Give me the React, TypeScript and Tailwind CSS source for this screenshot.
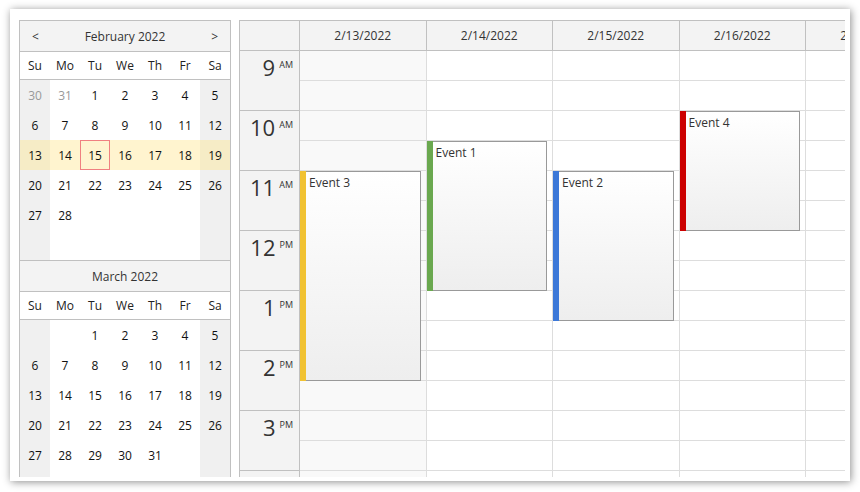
import React from "react";

type DayCell = { day: number | null; other?: boolean };

interface MonthProps {
  title: string;
  cells: DayCell[];
  arrows?: boolean;
  selectedRow?: number;
  today?: number;
}

const dayNames = ["Su", "Mo", "Tu", "We", "Th", "Fr", "Sa"];

const build = (lead: (number | null)[], count: number): DayCell[] => {
  const cells: DayCell[] = lead.map((d) => ({ day: d, other: d !== null }));
  for (let i = 1; i <= count; i++) cells.push({ day: i });
  while (cells.length < 42) cells.push({ day: null });
  return cells;
};

const february = build([30, 31], 28);
const march = build([null, null], 31);

const NavMonth: React.FC<MonthProps> = ({ title, cells, arrows, selectedRow, today }) => {
  const rows = [0, 1, 2, 3, 4, 5];
  return (
    <div className="border-t border-[#c0c0c0]">
      <div className="h-[31px] border-b border-[#c0c0c0] bg-[#f3f3f3] flex items-center justify-between px-[12px] pt-[1px] text-[#333] text-[12px]">
        <span className="w-[10px]">{arrows ? "<" : ""}</span>
        <span>{title}</span>
        <span className="w-[10px] text-right">{arrows ? ">" : ""}</span>
      </div>
      <div className="h-[28px] border-b border-[#c0c0c0] grid grid-cols-7 items-center text-center pt-[1px] text-[12px] text-[#222]">
        {dayNames.map((n) => (
          <span key={n}>{n}</span>
        ))}
      </div>
      {rows.map((r) => (
        <div key={r} className="grid grid-cols-7 h-[30px] text-[12px]">
          {cells.slice(r * 7, r * 7 + 7).map((c, i) => {
            const weekend = i === 0 || i === 6;
            const selected = selectedRow === r;
            let bg = weekend ? "bg-[#f0f0f0]" : "bg-white";
            if (selected) bg = weekend ? "bg-[#f6ecc6]" : "bg-[#fff4cf]";
            const isToday = today !== undefined && c.day === today && !c.other;
            return (
              <div
                key={i}
                className={`${bg} flex items-center justify-center pt-[2px] ${
                  c.other ? "text-[#999]" : "text-[#111]"
                } ${isToday ? "border border-[#f08080]" : ""}`}
              >
                {c.day ?? ""}
              </div>
            );
          })}
        </div>
      ))}
    </div>
  );
};

const columns = [
  { label: "2/13/2022", weekend: true },
  { label: "2/14/2022" },
  { label: "2/15/2022" },
  { label: "2/16/2022" },
  { label: "2/17/2022" },
  { label: "2/18/2022" },
];

// the last row (4 PM) is mostly cut off by the viewport, its label is not visible
const hours = [
  ["9", "AM"],
  ["10", "AM"],
  ["11", "AM"],
  ["12", "PM"],
  ["1", "PM"],
  ["2", "PM"],
  ["3", "PM"],
  ["", ""],
];

const events = [
  { col: 0, top: 120, height: 210, text: "Event 3", color: "bg-[#f1c232]" },
  { col: 1, top: 90, height: 150, text: "Event 1", color: "bg-[#6aa84f]" },
  { col: 2, top: 120, height: 150, text: "Event 2", color: "bg-[#3c78d8]" },
  { col: 3, top: 60, height: 120, text: "Event 4", color: "bg-[#cc0000]" },
];

const Scheduler: React.FC = () => {
  const slots = Array.from({ length: hours.length * 2 }, (_, i) => i);
  return (
    <div className="flex-1 h-full overflow-hidden border-l border-t border-[#c0c0c0]">
      <div className="flex h-[30px] border-b border-[#c0c0c0] bg-[#f3f3f3] text-[12px] text-[#333]">
        <div className="w-[60px] shrink-0 border-r border-[#c0c0c0]" />
        {columns.map((c) => (
          <div
            key={c.label}
            className="w-[126.5px] shrink-0 border-r border-[#c0c0c0] flex items-center justify-center pt-[1px]"
          >
            {c.label}
          </div>
        ))}
      </div>
      <div className="flex">
        <div className="w-[60px] shrink-0 border-r border-[#c0c0c0] bg-[#f3f3f3]">
          {hours.map(([h, ap], i) => (
            <div
              key={i}
              className="h-[60px] border-b border-[#c0c0c0] flex justify-end items-start pr-[6px] pt-[3px] text-[#333]"
            >
              <span className="text-[22px] leading-[26px]">{h}</span>
              <span className="text-[9px] leading-[10px] ml-[4px] mt-[6px]">{ap}</span>
            </div>
          ))}
        </div>
        {columns.map((c, ci) => (
          <div
            key={c.label}
            className={`relative w-[126.5px] shrink-0 border-r border-[#dddddd] ${
              c.weekend ? "bg-[#f9f9f9]" : "bg-white"
            }`}
          >
            {slots.map((s) => (
              <div key={s} className="h-[30px] border-b border-[#dddddd]" />
            ))}
            {events
              .filter((e) => e.col === ci)
              .map((e) => (
                <div
                  key={e.text}
                  className="absolute left-0 right-[5px] flex"
                  style={{ top: e.top, height: e.height }}
                >
                  <div className={`w-[6px] shrink-0 ${e.color}`} />
                  <div className="flex-1 border border-l-0 border-[#999] bg-gradient-to-b from-white to-[#eeeeee] pl-[3px] pt-[3px] text-[12px] text-[#333] leading-[16px]">
                    {e.text}
                  </div>
                </div>
              ))}
          </div>
        ))}
      </div>
    </div>
  );
};

export default function App() {
  return (
    <div className="min-h-screen bg-white pt-[9px] pl-[10px] font-['Open_Sans',sans-serif]">
      <div className="w-[840px] h-[472px] bg-white shadow-[1px_1px_8px_rgba(0,0,0,0.45)] pt-[11px] pl-[9px] pr-[5px] pb-[4px] flex gap-[8px] overflow-hidden">
        <div className="w-[212px] shrink-0 h-full overflow-hidden border-x border-[#c0c0c0]">
          <NavMonth title="February 2022" cells={february} arrows selectedRow={2} today={15} />
          <NavMonth title="March 2022" cells={march} />
        </div>
        <Scheduler />
      </div>
    </div>
  );
}
